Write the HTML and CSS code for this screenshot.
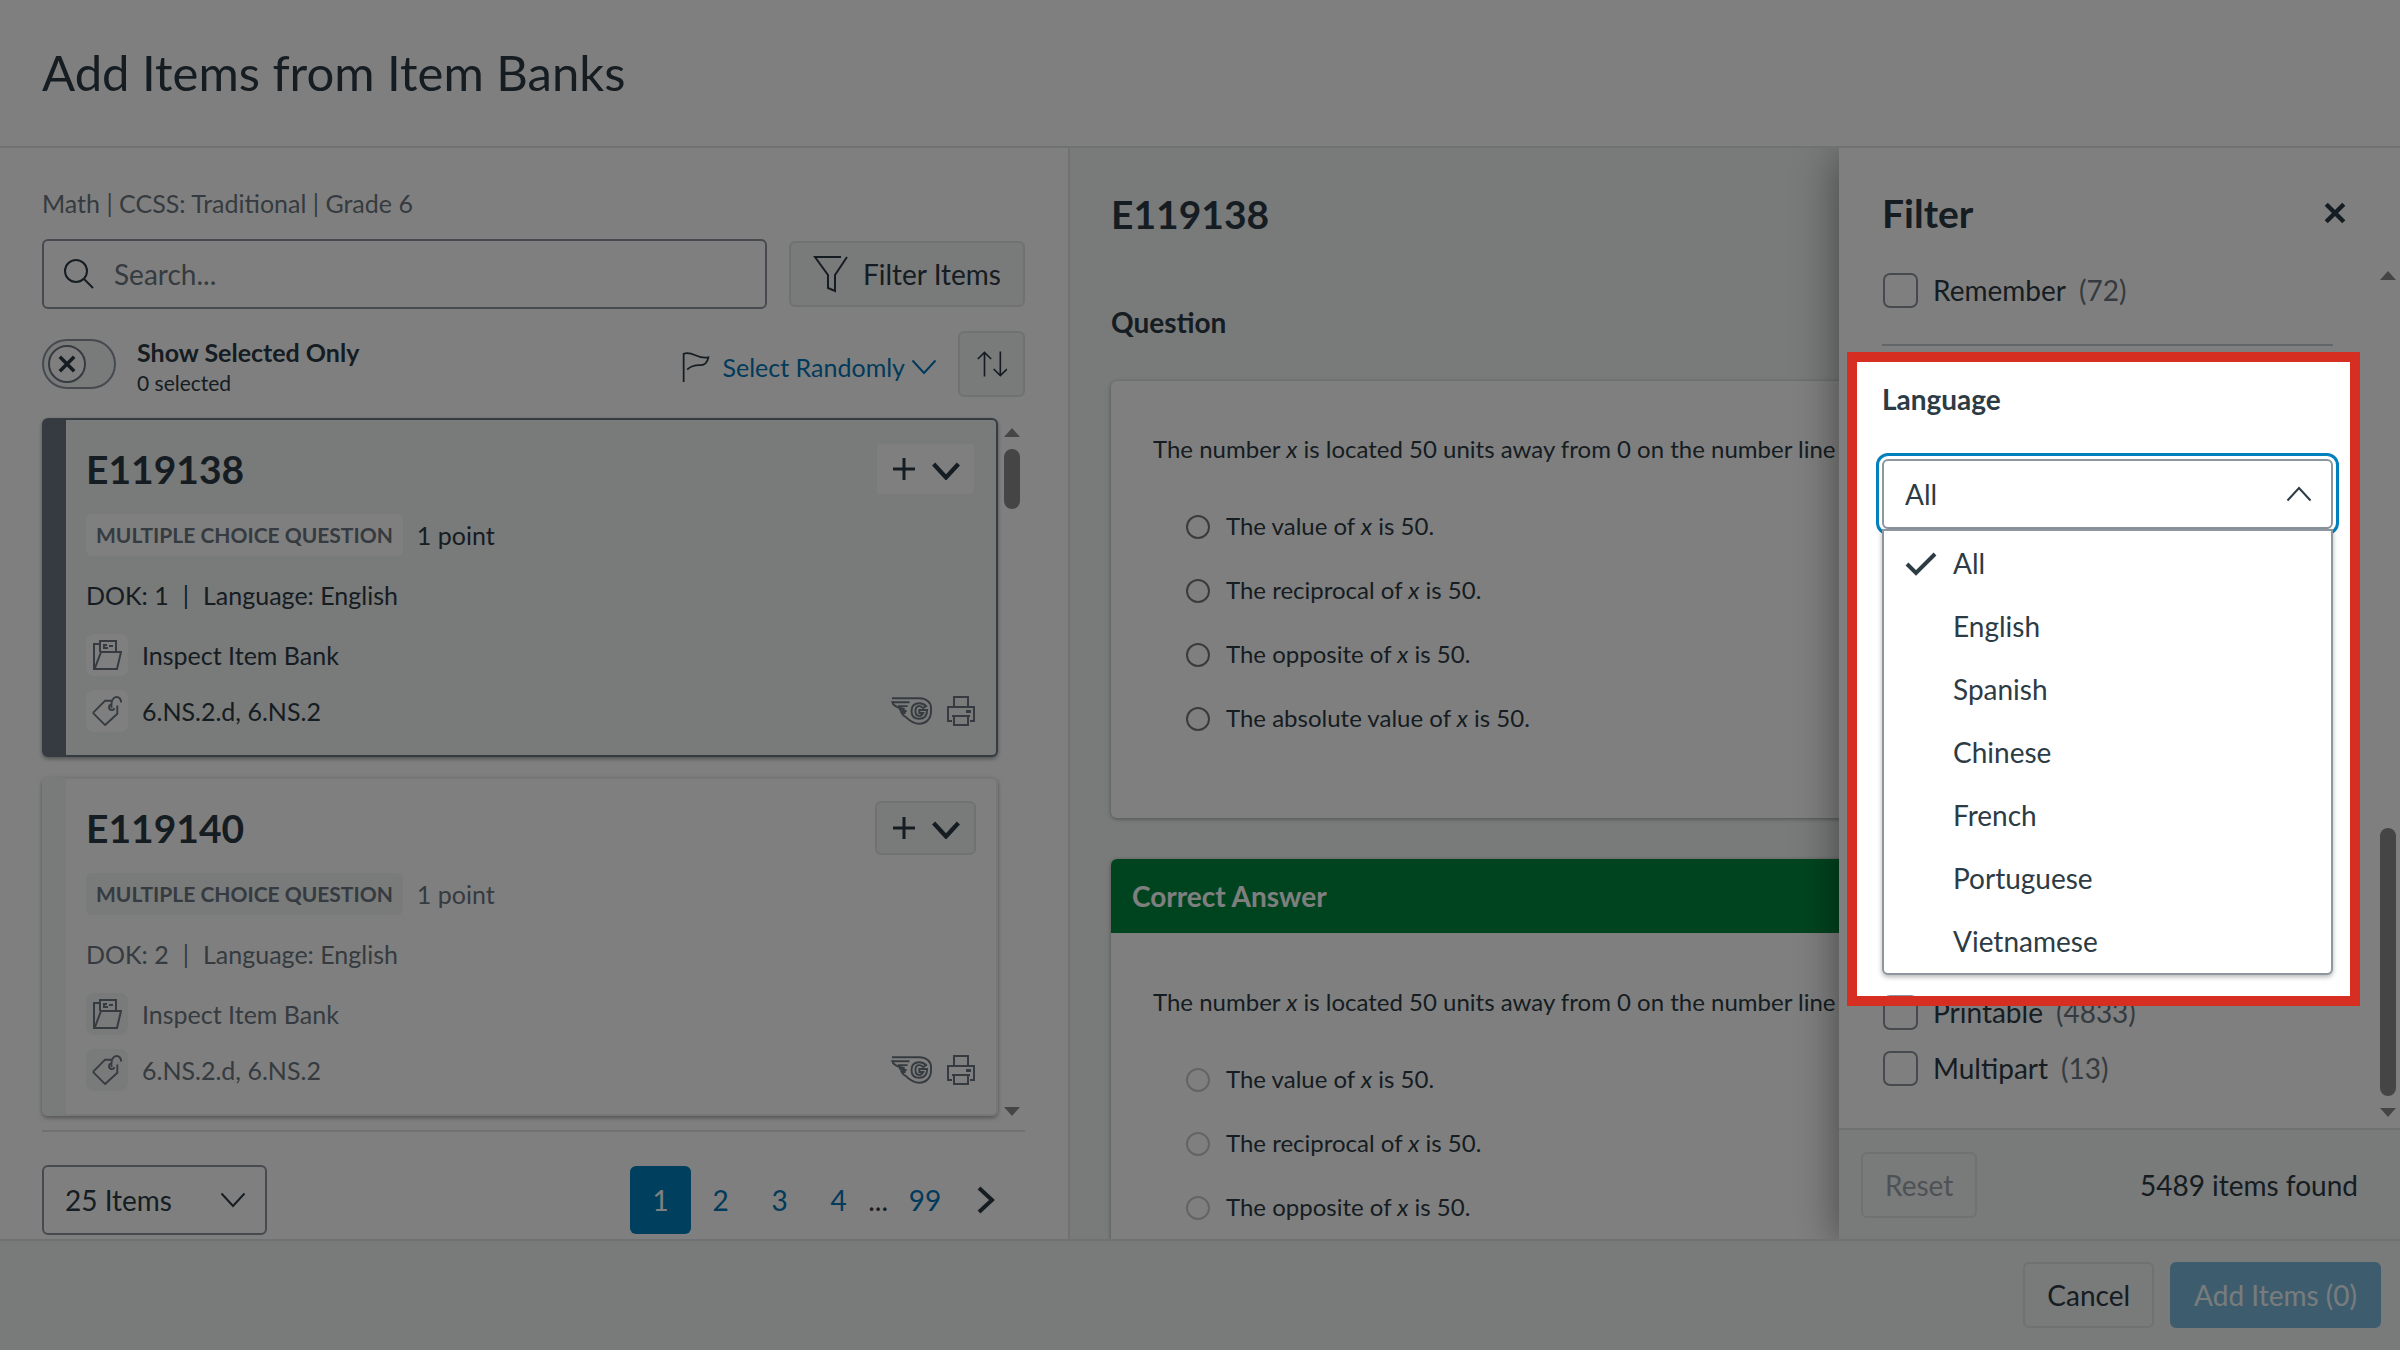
FILE: index.html
```
<!DOCTYPE html>
<html lang="en">
<head>
  <meta charset="utf-8">
  <title>Add Items from Item Banks</title>
  <link rel="stylesheet" href="styles.css">
</head>
<body>
  <!-- shared icons -->
  <svg class="sprite" aria-hidden="true">
    <symbol id="i-down" viewBox="0 0 26 16"><path d="M1.5 1.5 13 14 24.5 1.5"/></symbol>
    <symbol id="i-x" viewBox="0 0 20 20"><path d="M2 2 18 18M18 2 2 18"/></symbol>
    <symbol id="i-plus" viewBox="0 0 24 24"><path d="M12 1v22M1 12h22"/></symbol>
    <symbol id="i-folder" viewBox="0 0 30 30"><path d="M8 4H2v25h23l4-17H9L3 28M8 12V1h16v11M15 5h-3v3h3V7M17 6h4"/></symbol>
    <symbol id="i-tag" viewBox="0 0 32 32"><path d="M1 18 14 5h7M27 10v9L14 31 1 18M21 9a3 3 0 1 0 3 4M21 13c-1-7 1-11 5-12 3 0 5 2 5 6"/></symbol>
    <symbol id="i-wing" viewBox="0 0 44 30">
      <path d="M2 2h28c7 0 12 4 12 10v3c0 8-5 13-12 13-6 0-10-3-14-7-2-1-3-2-4-4h4c-3 0-5-1-6-4h5C8 12 3 10 2 5"/>
      <path d="M3 6h17M8 10h10M12 15h5"/>
      <path d="M37 10c-2-2-4-3-7-3-5 0-8 3-8 8s3 8 8 8c5 0 8-3 8-9h-8v3h4c-1 2-2 3-4 3-3 0-4-2-4-5s1-5 4-5c2 0 3 1 4 2z"/>
    </symbol>
    <symbol id="i-print" viewBox="0 0 30 30"><path d="M8 11V1h14v10M6 25H2V11h26v14h-4M8 20v9h14v-9M6 20h18M21 16h3v-1h-3z"/></symbol>
  </svg>

  <header class="page-header">
    <h1>Add Items from Item Banks</h1>
  </header>

  <main class="page-body">
    <section class="bank">
      <p class="crumbs">Math | CCSS: Traditional | Grade 6</p>

      <div class="search-row">
        <label class="search">
          <svg class="icon" viewBox="0 0 30 30"><circle cx="12" cy="12" r="11"/><path d="m20 20 9 9"/></svg>
          <input type="text" placeholder="Search..." aria-label="Search">
        </label>
        <button class="btn" type="button">
          <svg class="icon icon-dark" viewBox="0 0 36 38"><path d="M28 2H2l13 18v13l7 3V20L34 2"/></svg>
          Filter Items
        </button>
      </div>

      <div class="tools-row">
        <input class="toggle-input" type="checkbox" id="selected-only">
        <label class="toggle" for="selected-only">
          <span class="toggle-track"><span class="toggle-knob"><svg><use href="#i-x"/></svg></span></span>
          <span class="toggle-text"><b>Show Selected Only</b><small>0 selected</small></span>
        </label>
        <button class="random" type="button">
          <svg class="icon icon-dark" viewBox="0 0 32 34"><path d="M2 34V2c10-4 16 7 28 4-1 6-5 9-10 9-6 0-10 1-14 5"/></svg>
          Select Randomly
          <svg class="chevron"><use href="#i-down"/></svg>
        </button>
        <button class="btn sort" type="button" aria-label="Sort">
          <svg class="icon icon-dark" viewBox="0 0 36 32"><path d="M9 31V2M1 10l8-8 8 8M28 1v29M20 22l8 8 8-8"/></svg>
        </button>
      </div>

      <div class="list">
        <div class="cards">
          <article class="card selected">
            <div class="card-head">
              <h2>E119138</h2>
              <button class="add" type="button" aria-label="Add E119138"><svg class="plus"><use href="#i-plus"/></svg><svg class="chevron"><use href="#i-down"/></svg></button>
            </div>
            <div class="type"><span class="badge">Multiple Choice Question</span>1 point</div>
            <div class="meta"><span>DOK: 1</span><span>|</span><span>Language: English</span></div>
            <div class="line"><span class="chip"><svg><use href="#i-folder"/></svg></span>Inspect Item Bank</div>
            <div class="line"><span class="chip"><svg><use href="#i-tag"/></svg></span>6.NS.2.d, 6.NS.2
              <span class="flags"><svg class="wing"><use href="#i-wing"/></svg><svg><use href="#i-print"/></svg></span>
            </div>
          </article>
          <article class="card">
            <div class="card-head">
              <h2>E119140</h2>
              <button class="add" type="button" aria-label="Add E119140"><svg class="plus"><use href="#i-plus"/></svg><svg class="chevron"><use href="#i-down"/></svg></button>
            </div>
            <div class="type"><span class="badge">Multiple Choice Question</span>1 point</div>
            <div class="meta"><span>DOK: 2</span><span>|</span><span>Language: English</span></div>
            <div class="line"><span class="chip"><svg><use href="#i-folder"/></svg></span>Inspect Item Bank</div>
            <div class="line"><span class="chip"><svg><use href="#i-tag"/></svg></span>6.NS.2.d, 6.NS.2
              <span class="flags"><svg class="wing"><use href="#i-wing"/></svg><svg><use href="#i-print"/></svg></span>
            </div>
          </article>
        </div>
        <div class="scrollbar"><i class="up"></i><i class="thumb"></i><i class="down"></i></div>
      </div>

      <div class="pager">
        <div class="select-wrap per-page">
          <select aria-label="Items per page"><option>25 Items</option></select>
          <svg class="chevron"><use href="#i-down"/></svg>
        </div>
        <nav class="pages">
          <button class="current" type="button">1</button>
          <button type="button">2</button>
          <button type="button">3</button>
          <button type="button">4</button>
          <span>...</span>
          <button class="last" type="button">99</button>
          <button class="next" type="button" aria-label="Next page"><svg viewBox="0 0 18 28"><path d="m2 2 13 12L2 26"/></svg></button>
        </nav>
      </div>
    </section>

    <section class="preview">
      <h2>E119138</h2>
      <h3>Question</h3>
      <div class="panel question">
        <p>The number <i>x</i> is located 50 units away from 0 on the number line</p>
        <label><input type="radio" name="q">The value of <i>x</i> is 50.</label>
        <label><input type="radio" name="q">The reciprocal of <i>x</i> is 50.</label>
        <label><input type="radio" name="q">The opposite of <i>x</i> is 50.</label>
        <label><input type="radio" name="q">The absolute value of <i>x</i> is 50.</label>
      </div>
      <div class="panel">
        <h4>Correct Answer</h4>
        <div class="answer">
          <p>The number <i>x</i> is located 50 units away from 0 on the number line</p>
          <label><input type="radio" name="a" disabled>The value of <i>x</i> is 50.</label>
          <label><input type="radio" name="a" disabled>The reciprocal of <i>x</i> is 50.</label>
          <label><input type="radio" name="a" disabled>The opposite of <i>x</i> is 50.</label>
        </div>
      </div>
    </section>

    <aside class="filter">
      <div class="filter-head">
        <h2>Filter</h2>
        <button class="close" type="button" aria-label="Close"><svg><use href="#i-x"/></svg></button>
      </div>
      <div class="filter-body">
        <div class="filter-groups">
          <label class="check"><input type="checkbox">Remember <span>(72)</span></label>
          <hr>
          <div class="language">
            <label class="group-title" for="language">Language</label>
            <div class="select-wrap open">
              <select id="language"><option>All</option></select>
              <svg class="chevron"><use href="#i-down"/></svg>
              <ul class="menu">
                <li class="checked"><svg viewBox="0 0 32 24"><path d="m2 12 9 9L30 2"/></svg>All</li>
                <li>English</li>
                <li>Spanish</li>
                <li>Chinese</li>
                <li>French</li>
                <li>Portuguese</li>
                <li>Vietnamese</li>
              </ul>
            </div>
          </div>
          <label class="check"><input type="checkbox">Printable <span>(4833)</span></label>
          <label class="check"><input type="checkbox">Multipart <span>(13)</span></label>
        </div>
        <div class="scrollbar at-end"><i class="up"></i><i class="thumb"></i><i class="down"></i></div>
      </div>
      <div class="filter-foot">
        <button class="btn" type="button" disabled>Reset</button>
        <span>5489 items found</span>
      </div>
    </aside>
  </main>

  <footer class="page-footer">
    <button class="btn" type="button">Cancel</button>
    <button class="btn primary" type="button" disabled>Add Items (0)</button>
  </footer>

  <!-- dims the page around the language filter -->
  <div class="spotlight"></div>
</body>
</html>
```

FILE: styles.css
```
* {
  box-sizing: border-box;
}
body {
  margin: 0;
  height: 100vh;
  display: flex;
  flex-direction: column;
  overflow: hidden;
  background: #fff;
  color: #2d3b45;
  font-family: Lato, "Open Sans", sans-serif;
  font-size: 28px;
  line-height: 36px;
}
h1, h2, h3, h4, p, ul {
  margin: 0;
  padding: 0;
}
h1 {
  font-size: 49px;
  line-height: 64px;
  font-weight: 400;
}
h2 {
  font-size: 39px;
  line-height: 50px;
  font-weight: 700;
}
button, input, select {
  font: inherit;
  color: inherit;
}
svg {
  fill: none;
  stroke: currentColor;
  stroke-width: 2;
  flex: none;
}
.sprite {
  position: absolute;
  width: 0;
  height: 0;
}
.icon {
  width: 30px;
  height: 30px;
}
.chevron {
  width: 26px;
  height: 16px;
}
.btn {
  display: flex;
  align-items: center;
  justify-content: center;
  gap: 14px;
  height: 66px;
  padding: 0 22px;
  border: 2px solid #dfe2e4;
  border-radius: 6px;
  background: #f2f4f4;
}
.btn:disabled {
  color: #9da5ab;
}

/* header and footer */
.page-header {
  padding: 40px 42px 42px;
  border-bottom: 2px solid #dfe2e4;
}
.page-footer {
  display: flex;
  justify-content: flex-end;
  gap: 16px;
  height: 111px;
  padding: 21px 19px;
  border-top: 2px solid #dfe2e4;
  background: #f2f4f4;
}
.btn.primary {
  border-color: #7abbdd;
  background: #7abbdd;
  color: #f2f8fb;
}
.page-body {
  flex: 1;
  min-height: 0;
  display: flex;
  position: relative;
  overflow: hidden;
}

/* item list */
.bank {
  flex: 0 0 44.5%;
  display: flex;
  flex-direction: column;
  padding: 37px 43px 0 42px;
}
.crumbs {
  font-size: 25px;
  color: #6b7780;
}
.search-row, .tools-row {
  display: flex;
  align-items: center;
}
.search-row {
  gap: 22px;
  margin-top: 18px;
}
.search {
  flex: 1;
  display: flex;
  align-items: center;
  gap: 20px;
  height: 70px;
  padding: 0 20px;
  border: 2px solid #8d959f;
  border-radius: 6px;
}
.search input {
  flex: 1;
  min-width: 0;
  padding: 0;
  border: 0;
  outline: 0;
}
.search input::placeholder {
  color: #6b7780;
}
.search-row .icon-dark {
  width: 36px;
  height: 38px;
}
.tools-row {
  margin-top: 21px;
  height: 68px;
}
.toggle-input {
  position: absolute;
  opacity: 0;
}
.toggle {
  display: flex;
  align-items: center;
  gap: 21px;
  margin-right: auto;
}
.toggle-track {
  width: 74px;
  height: 50px;
  padding: 4px;
  border: 2px solid #8d959f;
  border-radius: 25px;
  background: #f2f4f4;
}
.toggle-knob {
  display: flex;
  align-items: center;
  justify-content: center;
  width: 38px;
  height: 38px;
  border: 2px solid #6b7780;
  border-radius: 50%;
  background: #fff;
}
.toggle-knob svg {
  width: 18px;
  height: 18px;
  stroke-width: 4;
}
.toggle-text {
  display: flex;
  flex-direction: column;
  padding-top: 5px;
}
.toggle-text b {
  font-size: 25px;
  line-height: 32px;
}
.toggle-text small {
  font-size: 21px;
  line-height: 30px;
}
.random {
  display: flex;
  align-items: center;
  gap: 6px;
  margin-right: 21px;
  padding: 6px 0 0;
  border: 0;
  background: none;
  color: #0374b5;
  font-size: 25px;
}
.random .icon {
  margin-right: 6px;
}
.icon-dark {
  color: #2d3b45;
}
.sort {
  width: 67px;
  padding: 0;
}
.list {
  display: flex;
  margin-top: 20px;
  padding-bottom: 14px;
  border-bottom: 2px solid #dfe2e4;
}
.cards {
  flex: 1;
  display: flex;
  flex-direction: column;
  gap: 20px;
}
.card {
  padding: 22px 20px 23px;
  border: 2px solid #eceeef;
  border-left: 24px solid #f2f4f4;
  border-radius: 6px;
  box-shadow: 0 2px 4px rgba(0, 0, 0, 0.35);
  color: #6b7780;
  font-size: 25px;
}
.card.selected {
  border-color: #6b7780;
  background: #f2f4f4;
  color: #2d3b45;
}
.card-head, .type, .meta, .line, .flags {
  display: flex;
  align-items: center;
}
.card-head {
  justify-content: space-between;
  color: #2d3b45;
}
.add {
  display: flex;
  align-items: center;
  gap: 16px;
  height: 54px;
  padding: 0 14px 0 15px;
  border: 2px solid #dfe2e4;
  border-radius: 6px;
  background: #f2f4f4;
}
.selected .add {
  border-color: #f2f4f4;
  background: #fff;
}
.plus {
  width: 24px;
  height: 24px;
  stroke-width: 3;
}
.add .chevron {
  width: 28px;
  height: 18px;
  margin-top: 3px;
  stroke-width: 4;
}
.type {
  gap: 14px;
  margin-top: 18px;
}
.badge {
  padding: 6px 10px;
  border-radius: 6px;
  background: #f2f4f4;
  color: #6b7780;
  font-size: 21px;
  line-height: 30px;
  font-weight: 700;
  text-transform: uppercase;
}
.selected .badge, .selected .chip {
  background: #fff;
}
.meta {
  gap: 14px;
  margin: 21px 0;
}
.line {
  gap: 14px;
  margin-top: 14px;
}
.chip {
  display: flex;
  align-items: center;
  justify-content: center;
  width: 42px;
  height: 42px;
  border-radius: 8px;
  background: #f2f4f4;
  color: #6b7780;
}
.chip svg {
  width: 30px;
  height: 30px;
}
.flags {
  gap: 13px;
  margin-left: auto;
  color: #6b7780;
}
.flags svg {
  width: 30px;
  height: 30px;
}
.flags .wing {
  width: 43px;
}

/* scrollbars */
.scrollbar {
  display: flex;
  flex-direction: column;
  align-items: center;
  width: 27px;
  padding-top: 10px;
}
.scrollbar .up, .scrollbar .down {
  border: 8px solid transparent;
  border-top: 0;
  border-bottom: 9px solid #8b8b8b;
}
.scrollbar .down {
  margin-top: auto;
  border-top: 9px solid #8b8b8b;
  border-bottom: 0;
}
.scrollbar .thumb {
  width: 16px;
  height: 60px;
  margin-top: 12px;
  border-radius: 8px;
  background: #8b8b8b;
}
.scrollbar.at-end .thumb {
  height: 268px;
  margin-top: auto;
}
.scrollbar.at-end .down {
  margin-top: 12px;
}

/* selects and pagination */
.select-wrap {
  position: relative;
}
.select-wrap select {
  appearance: none;
  display: block;
  width: 100%;
  height: 70px;
  padding: 0 21px;
  border: 2px solid #8d959f;
  border-radius: 6px;
  background: #fff;
}
.select-wrap > .chevron {
  position: absolute;
  top: 27px;
  right: 21px;
  pointer-events: none;
}
.pager {
  display: flex;
  align-items: center;
  justify-content: space-between;
  padding-top: 33px;
}
.per-page {
  width: 225px;
}
.pages {
  display: flex;
  align-items: center;
  margin-right: 15px;
}
.pages button {
  width: 59px;
  height: 68px;
  padding: 0;
  border: 0;
  border-radius: 6px;
  background: none;
  color: #0374b5;
}
.pages .current {
  width: 61px;
  background: #0081bd;
  color: #fff;
}
.pages .last {
  width: 74px;
}
.pages .next {
  width: 48px;
  color: #2d3b45;
}
.next svg {
  display: block;
  width: 18px;
  height: 28px;
  margin: auto;
  stroke-width: 4;
}

/* preview */
.preview {
  flex: 1;
  min-width: 0;
  padding: 41px;
  border-left: 2px solid #dfe2e4;
  background: #f2f4f4;
}
.preview h3 {
  margin: 65px 0 41px;
  font-size: 28px;
  line-height: 36px;
}
.panel {
  margin-bottom: 41px;
  border-radius: 6px;
  background: #fff;
  box-shadow: 0 1px 4px rgba(0, 0, 0, 0.35);
  font-size: 24px;
}
.panel h4 {
  padding: 19px 21px;
  border-radius: 6px 6px 0 0;
  background: #00893f;
  color: #fff;
  font-size: 28px;
}
.question {
  padding: 50px 42px 68px;
}
.answer {
  padding: 51px 42px;
}
.panel p {
  margin-bottom: 27px;
}
.panel label {
  display: block;
  padding: 14px 0 14px 33px;
}
.panel input {
  appearance: none;
  width: 24px;
  height: 24px;
  margin: 0 16px 0 0;
  border: 2px solid #767676;
  border-radius: 50%;
  vertical-align: -4px;
}
.panel input:disabled {
  border-color: #c8c8c8;
}

/* filter tray */
.filter {
  position: absolute;
  top: 0;
  right: 0;
  bottom: 0;
  width: 561px;
  display: flex;
  flex-direction: column;
  background: #fff;
  box-shadow: 0 6px 42px rgba(0, 0, 0, 0.45);
}
.filter-head {
  display: flex;
  align-items: center;
  justify-content: space-between;
  padding: 40px 54px 24px 43px;
}
.close {
  padding: 0;
  border: 0;
  background: none;
}
.close svg {
  display: block;
  width: 22px;
  height: 22px;
  stroke-width: 4;
}
.filter-body {
  flex: 1;
  min-height: 0;
  display: flex;
  justify-content: space-between;
}
.filter-groups {
  width: 451px;
  margin-left: 43px;
}
.filter-body .scrollbar {
  width: 24px;
  padding: 9px 0 11px;
}
.check {
  display: flex;
  align-items: center;
  height: 56px;
}
.check input {
  appearance: none;
  width: 35px;
  height: 35px;
  margin: 0 15px 0 1px;
  border: 2px solid #8d959f;
  border-radius: 7px;
}
.check span {
  margin-left: 13px;
  color: #6b7780;
}
hr {
  margin: 26px 0 35px;
  border: 0;
  border-top: 2px solid #c7cdd1;
}
.language {
  height: 603px;
}
.group-title {
  display: block;
  margin-bottom: 42px;
  font-weight: 700;
}
.open select {
  outline: 3px solid #0081bd;
  outline-offset: 3px;
}
.open > .chevron {
  transform: rotate(180deg);
}
.menu {
  position: absolute;
  top: 70px;
  left: 0;
  right: 0;
  padding-top: 1px;
  border: 2px solid #8d959f;
  border-radius: 0 0 6px 6px;
  background: #fff;
  box-shadow: 0 2px 5px rgba(0, 0, 0, 0.3);
  list-style: none;
}
.menu li {
  height: 63px;
  padding-left: 69px;
  line-height: 63px;
}
.menu .checked {
  display: flex;
  align-items: center;
  gap: 16px;
  padding-left: 21px;
}
.menu svg {
  width: 32px;
  height: 24px;
  stroke-width: 4;
}
.filter-foot {
  display: flex;
  align-items: center;
  justify-content: space-between;
  height: 111px;
  padding: 0 42px 0 22px;
  border-top: 2px solid #dfe2e4;
  background: #f2f4f4;
}

.spotlight {
  position: fixed;
  top: 352px;
  right: 40px;
  width: 513px;
  height: 654px;
  border: 10px solid #d62e20;
  box-shadow: 0 0 0 2400px rgba(0, 0, 0, 0.5);
  pointer-events: none;
}
```
